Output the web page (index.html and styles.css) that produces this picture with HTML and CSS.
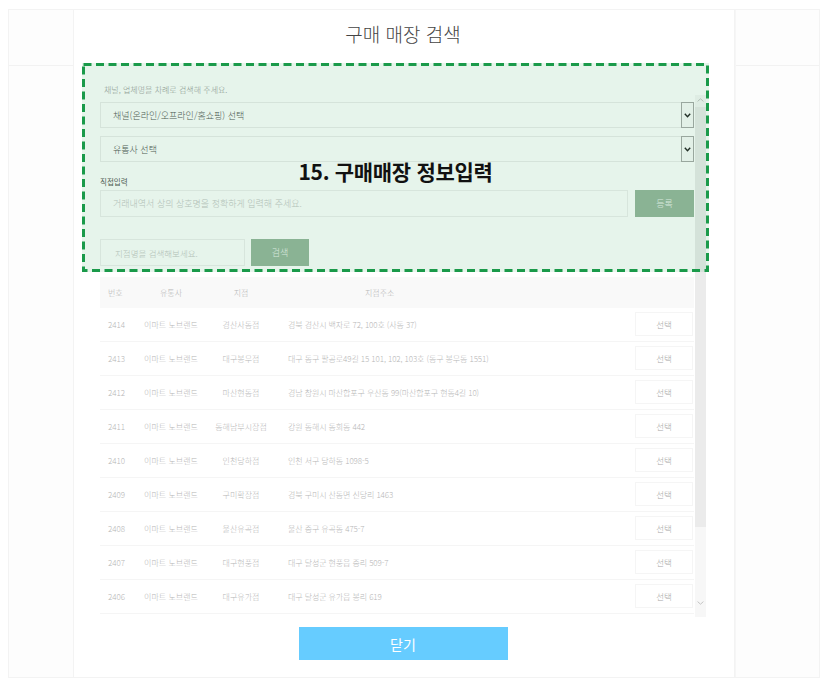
FILE: index.html
```html
<!DOCTYPE html>
<html lang="ko">
<head>
<meta charset="utf-8">
<title>구매 매장 검색</title>
<link rel="stylesheet" href="styles.css">
</head>
<body>
<div class="frame">
  <div class="side side-left"><div class="side-top"></div></div>
  <div class="modal">
    <h1 class="title">구매 매장 검색</h1>
    <p class="guide">채널, 업체명을 차례로 검색해 주세요.</p>
    <div class="scroll">
      <div class="scroll-body">
        <div class="select">
          <span class="select-text">채널(온라인/오프라인/홈쇼핑) 선택</span>
          <span class="select-arrow"><svg width="7" height="5" viewBox="0 0 7 5"><polyline points="0.8,0.8 3.5,3.8 6.2,0.8" fill="none" stroke="#222" stroke-width="1.4"/></svg></span>
        </div>
        <div class="select select-second">
          <span class="select-text">유통사 선택</span>
          <span class="select-arrow"><svg width="7" height="5" viewBox="0 0 7 5"><polyline points="0.8,0.8 3.5,3.8 6.2,0.8" fill="none" stroke="#222" stroke-width="1.4"/></svg></span>
        </div>
        <p class="field-label">직접입력</p>
        <div class="input-row">
          <input class="text-input input-wide" type="text" placeholder="거래내역서 상의 상호명을 정확하게 입력해 주세요.">
          <button class="btn-sub btn-register">등록</button>
        </div>
        <div class="input-row search-row">
          <input class="text-input input-search" type="text" placeholder="지점명을 검색해보세요.">
          <button class="btn-sub btn-search">검색</button>
        </div>
        <div class="table">
          <div class="thead">
            <span class="c-no">번호</span>
            <span class="c-mid">유통사</span>
            <span class="c-mid">지점</span>
            <span class="c-addr-h">지점주소</span>
            <span></span>
          </div>
          <div class="tr"><span class="c-no">2414</span><span class="c-mid">이마트 노브랜드</span><span class="c-mid">경산사동점</span><span class="c-addr">경북 경산시 백자로 72, 100호 (사동 37)</span><button class="pick">선택</button></div>
          <div class="tr"><span class="c-no">2413</span><span class="c-mid">이마트 노브랜드</span><span class="c-mid">대구봉무점</span><span class="c-addr">대구 동구 팔공로49길 15 101, 102, 103호 (동구 봉무동 1551)</span><button class="pick">선택</button></div>
          <div class="tr"><span class="c-no">2412</span><span class="c-mid">이마트 노브랜드</span><span class="c-mid">마산현동점</span><span class="c-addr">경남 창원시 마산합포구 우산동 99(마산합포구 현동4길 10)</span><button class="pick">선택</button></div>
          <div class="tr"><span class="c-no">2411</span><span class="c-mid">이마트 노브랜드</span><span class="c-mid">동해남부시장점</span><span class="c-addr">강원 동해시 동회동 442</span><button class="pick">선택</button></div>
          <div class="tr"><span class="c-no">2410</span><span class="c-mid">이마트 노브랜드</span><span class="c-mid">인천당하점</span><span class="c-addr">인천 서구 당하동 1098-5</span><button class="pick">선택</button></div>
          <div class="tr"><span class="c-no">2409</span><span class="c-mid">이마트 노브랜드</span><span class="c-mid">구미확장점</span><span class="c-addr">경북 구미시 산동면 신당리 1463</span><button class="pick">선택</button></div>
          <div class="tr"><span class="c-no">2408</span><span class="c-mid">이마트 노브랜드</span><span class="c-mid">울산유곡점</span><span class="c-addr">울산 중구 유곡동 475-7</span><button class="pick">선택</button></div>
          <div class="tr"><span class="c-no">2407</span><span class="c-mid">이마트 노브랜드</span><span class="c-mid">대구현풍점</span><span class="c-addr">대구 달성군 현풍읍 중리 509-7</span><button class="pick">선택</button></div>
          <div class="tr"><span class="c-no">2406</span><span class="c-mid">이마트 노브랜드</span><span class="c-mid">대구유가점</span><span class="c-addr">대구 달성군 유가읍 봉리 619</span><button class="pick">선택</button></div>
        </div>
      </div>
      <div class="scrollbar">
        <span class="sb-arrow sb-up"><svg width="7" height="4" viewBox="0 0 7 4"><polyline points="0.6,3.4 3.5,0.8 6.4,3.4" fill="none" stroke="#c4c4c4" stroke-width="1"/></svg></span>
        <span class="sb-thumb"></span>
        <span class="sb-space"></span>
        <span class="sb-arrow sb-down"><svg width="7" height="4" viewBox="0 0 7 4"><polyline points="0.6,0.6 3.5,3.2 6.4,0.6" fill="none" stroke="#c4c4c4" stroke-width="1"/></svg></span>
      </div>
    </div>
    <div class="actions">
      <button class="btn-close">닫기</button>
    </div>
    <div class="annotation">
      <svg class="annotation-border" width="627" height="209" viewBox="0 0 627 209"><rect x="1.5" y="1.5" width="624" height="206" fill="none" stroke="#1a9a4a" stroke-width="3" stroke-dasharray="8 4.5"/></svg>
      <span class="annotation-text">15. 구매매장 정보입력</span>
    </div>
  </div>
  <div class="side side-right"><div class="side-top"></div></div>
</div>
</body>
</html>
```

FILE: styles.css
```css
* {
  box-sizing: border-box;
  margin: 0;
  padding: 0;
}

html,
body {
  background: #fff;
}

body {
  font-family: "Noto Sans CJK KR", "Noto Sans", sans-serif;
  color: #333;
}

.frame {
  display: flex;
  margin: 9px 10px 0 8px;
  height: 669px;
  border: 1px solid #f3f3f3;
  background: #fdfdfd;
}

.side {
  flex: none;
}

.side-left {
  width: 64px;
}

.side-right {
  flex: 1;
  border-left: 1px solid #f6f6f6;
}

.side-top {
  height: 56px;
  border-bottom: 1px solid #f2f2f2;
}

.modal {
  position: relative;
  flex: none;
  width: 662px;
  background: #fff;
  border-left: 1px solid #f3f3f3;
  border-right: 1px solid #f3f3f3;
  padding: 0 28px 0 26px;
  display: flex;
  flex-direction: column;
}

.title {
  padding-top: 11px;
  line-height: 26px;
  font-size: 19px;
  font-weight: 300;
  color: #444;
  text-align: center;
}

.guide {
  margin-top: 38px;
  padding-left: 4px;
  line-height: 10px;
  font-size: 8px;
  font-weight: 300;
  color: #999;
}

.scroll {
  display: flex;
  gap: 1px;
  height: 522px;
}

.scroll-body {
  width: 594px;
  padding-top: 7px;
}

.select {
  display: flex;
  align-items: center;
  height: 26px;
  border: 1px solid #ececec;
  background: #fff;
  padding-left: 12px;
  font-size: 9px;
  font-weight: 300;
  color: #555;
}

.select-second {
  margin-top: 8px;
}

.select-text {
  flex: 1;
}

.select-arrow {
  display: flex;
  align-items: center;
  justify-content: center;
  align-self: stretch;
  width: 13px;
  margin: -1px -1px -1px 0;
  border: 1px solid #a9a9a9;
  background: #fbfbfb;
}

.field-label {
  margin-top: 15px;
  line-height: 10px;
  font-size: 7.5px;
  color: #555;
}

.input-row {
  display: flex;
  gap: 7px;
  margin-top: 3px;
  height: 27px;
}

.search-row {
  margin-top: 22px;
  gap: 6px;
}

.text-input {
  height: 27px;
  border: 1px solid #efefef;
  background: #fff;
  padding-left: 12px;
  font-family: inherit;
  font-size: 9px;
  font-weight: 300;
  color: #555;
  outline: none;
}

.text-input::placeholder {
  color: #c6c6c6;
}

.input-wide {
  flex: 1;
}

.input-search {
  width: 145px;
  padding-left: 14px;
  font-size: 8.5px;
}

.btn-sub {
  width: 58px;
  height: 27px;
  border: none;
  background: #98b69e;
  color: #eef4ef;
  font-family: inherit;
  font-size: 9px;
  font-weight: 300;
}

.btn-register {
  width: 59px;
}

.table {
  margin-top: 11px;
}

.thead,
.tr {
  display: grid;
  grid-template-columns: 36px 70px 70px 1fr 60px;
  align-items: center;
  font-size: 8px;
  font-weight: 300;
  color: #b6b6b6;
  white-space: nowrap;
}

.thead {
  height: 31px;
  background: #f9f9f9;
}

.tr {
  height: 34px;
  border-bottom: 1px solid #f5f5f5;
}

.c-no {
  padding-left: 8px;
}

.c-mid {
  text-align: center;
}

.c-addr-h {
  padding-left: 89px;
}

.c-addr {
  padding-left: 12px;
  letter-spacing: -0.1px;
}

.pick {
  justify-self: center;
  width: 58px;
  height: 24px;
  margin-top: -2px;
  border: 1px solid #f5f5f5;
  background: #fff;
  color: #a8a8a8;
  font-family: inherit;
  font-size: 8.5px;
  font-weight: 300;
}

.scrollbar {
  display: flex;
  flex-direction: column;
  align-items: stretch;
  width: 11px;
  background: #f7f7f7;
  padding-bottom: 8px;
}

.sb-arrow {
  display: flex;
  align-items: center;
  justify-content: center;
}

.sb-up {
  height: 10px;
}

.sb-down {
  height: 12px;
}

.sb-thumb {
  height: 420px;
  margin-top: 2px;
  background: #ebebeb;
}

.sb-space {
  flex: 1;
}

.actions {
  display: flex;
  justify-content: center;
  margin-top: 10px;
}

.btn-close {
  width: 209px;
  height: 33px;
  border: none;
  background: #66ccff;
  color: #fff;
  font-family: inherit;
  font-size: 14px;
}

.annotation {
  position: absolute;
  left: 8px;
  top: 53px;
  width: 627px;
  height: 209px;
  background: rgba(26, 155, 75, 0.11);
  display: flex;
  align-items: center;
  justify-content: center;
  padding-top: 6px;
}

.annotation-border {
  position: absolute;
  left: 0;
  top: 0;
}

.annotation-text {
  font-size: 21px;
  font-weight: 700;
  color: #111;
  letter-spacing: -0.3px;
}
```
